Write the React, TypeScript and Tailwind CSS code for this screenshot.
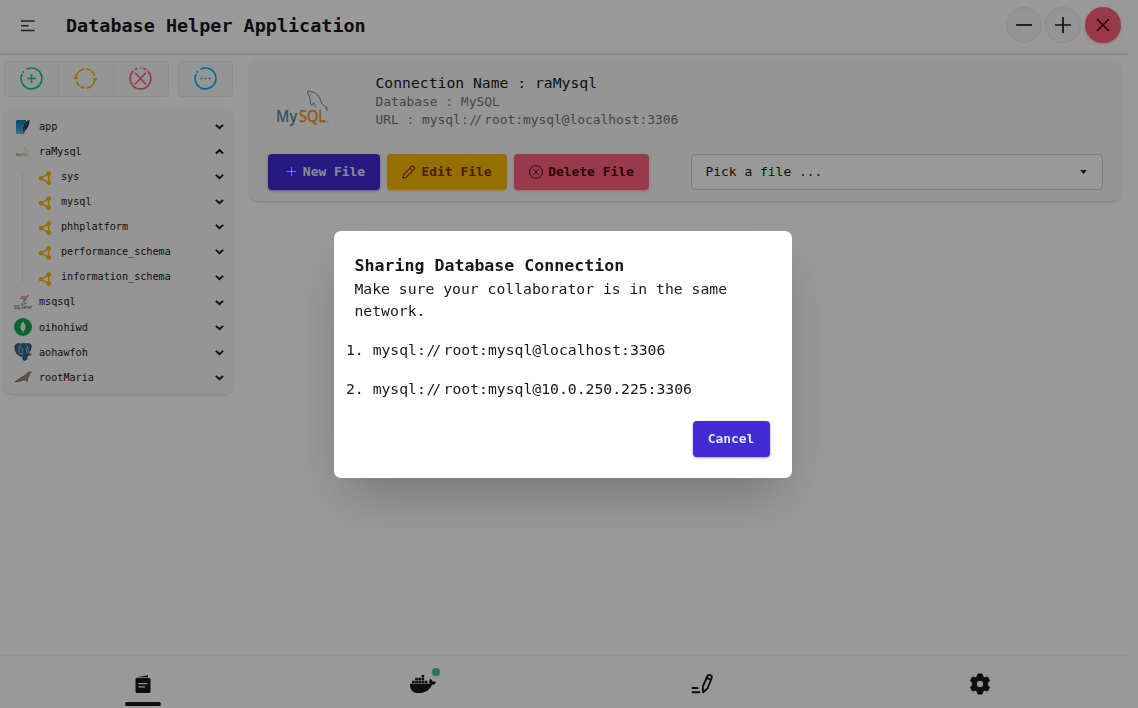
import React from "react";
import { FaDocker } from "react-icons/fa";

const Url = ({ rest }: { rest: string }) => (
  <>
    mysql:<span className="pl-[0.04em] pr-[0.36em] tracking-[-0.2em]">//</span>
    {rest}
  </>
);

function Round({ children, kind = "plus" }: { children?: React.ReactNode; kind?: string }) {
  return (
    <svg viewBox="0 0 24 24" className="size-[25px]" fill="none" stroke="currentColor" strokeWidth="1.600" strokeLinecap="round" strokeLinejoin="round">
      {kind === "plus" && <path d="M7.800 2.900A10 10 0 1 1 2.800 8.100M3.900 6l.2-.3" />}
      {kind === "close" && <path d="M19.300 5.200A10 10 0 1 1 4.700 5.200M7 3.300l1.300-.6M12 1.950v.05M15.200 2.500L17 3.300" />}
      {children}
    </svg>
  );
}

function Chevron({ up }: { up?: boolean }) {
  return (
    <svg viewBox="0 0 10 10" className="size-[9px]" fill="none" stroke="#18181b" strokeWidth="2.200">
      <path d={up ? "M1 7.200l4-3.700 4 3.700" : "M1 3.200l4 3.700 4-3.700"} />
    </svg>
  );
}

function MysqlLogo({ className }: { className: string }) {
  return (
    <svg viewBox="0 0 54 36" overflow="visible" className={className}>
      <g fill="none" stroke="#5d87a1" strokeWidth="1">
        <path d="M39 17.500c-1.500-2-2-3.500-2.200-5-1 1-1.500 2.500-2 3-2-2-1.500-5-1.600-6.500C32.500 6 30.500 4 30.500 2c0-1.500 2-1.300 3.500-.3 3 .3 5.500 1.500 7.500 4.300 2 3 2.500 7 4.500 9l4.500 3-2 .5 2.500 2.500" />
        <path d="M33.500 4.500v.7" />
      </g>
      <g transform="scale(0.88 1)" fontSize="16.500" fontFamily="Open Sans, sans-serif">
        <text x="-1" y="32.500" fontWeight="600" fill="#5d87a1">My</text>
        <text x="25" y="32.500" fill="#f29111" stroke="#f29111" strokeWidth=".4">SQL</text>
      </g>
      <path d="M50 32h1.500" stroke="#f29111" />
    </svg>
  );
}

function SqliteLogo() {
  return (
    <svg viewBox="0 0 16 16" className="size-4">
      <defs>
        <linearGradient id="lite" x1="0" y1="0" x2="0" y2="1">
          <stop offset="0" stopColor="#1278b5" />
          <stop offset="1" stopColor="#65b8e8" />
        </linearGradient>
      </defs>
      <path d="M2.500 1H11L9.500 15H2.500Q1 15 1 13.500v-11Q1 1 2.500 1Z" fill="url(#lite)" />
      <path d="M14.500 1C12 .5 9 5 8 9.500V14c2-2 6.500-6 6.500-13Z" fill="#0b3549" />
      <path d="M13.500 2Q9.500 7 8 15" stroke="#5ea9c9" strokeWidth=".6" fill="none" />
    </svg>
  );
}

function SqlServerLogo() {
  return (
    <svg viewBox="0 0 18 18" overflow="visible" className="size-[18px]">
      <path d="M7 3.500l5 .5 3-2-4 4.500-5-1.500M8.500 4.500l3 2 2-3" fill="none" stroke="#e0747a" strokeWidth="1" />
      <path d="M11 6.500l-4 5 5.500-1L10 9.500l2-3" fill="none" stroke="#8caed2" strokeWidth="1" />
      <text x="0" y="16" fontSize="5" fontFamily="Open Sans, sans-serif" fill="#333" textLength="18" lengthAdjust="spacingAndGlyphs">SQL Server</text>
    </svg>
  );
}

function MongoLogo() {
  return (
    <svg viewBox="0 0 18 18" className="size-[18px]">
      <circle cx="9" cy="9" r="9" fill="#12a84f" />
      <path d="M9 3.500c3.300 3.300 3 7.700.3 10V15h-.6v-1.500C6 11.200 5.700 6.800 9 3.500Z" fill="#fff" />
      <path d="M9 5v9" stroke="#b8d8c5" strokeWidth=".5" />
    </svg>
  );
}

function PostgresLogo() {
  return (
    <svg viewBox="0 0 18 18" className="size-[18px]">
      <path d="M1 3C2 0 5 .5 6.500 1 9 0 11 .5 12 .8c3-.8 5.500 0 5.300 3-.3 3-2 5.500-3 7l3 .2c-1 1.500-3 1.500-4 1.500-.1 2-.2 5-2.500 5-2 0-2.300-2-2.400-5-1.500 1.500-3 .8-3-.5C2.500 12.500.200 6 1 3Z" fill="#336791" stroke="#333" strokeWidth=".6" />
      <path d="M6.500 1.500C4.500 4 5 7 5 9.500c.5 1.500 2 1.500 3 .5M6 5c1.500-.8 2.500 0 2.300 2L8 12M12 1.500c2 2 2.500 5 2 8M13.800 5c-1-.6-2 0-1.600 2 .2 1.500.8 2.500 1.500 3.500" fill="none" stroke="#dfe9f1" strokeWidth=".6" />
    </svg>
  );
}

function MariaLogo() {
  return (
    <svg viewBox="0 0 18 18" className="size-[18px]">
      <path d="M17.300 4c-1.800.1-2.800-.2-4.100 1.300-1.500 2-3 2.500-5 3.500C6 10 5 11.500 3 12.500L.8 13.800l3 0 3.200-1 2-.5 2.500-.3 1.500 1.700.5-1.200c-.3-2 1.500-3.500 2-6.500Z" fill="#b58a66" stroke="#5b4a40" strokeWidth=".6" />
    </svg>
  );
}

function ShareIcon() {
  return (
    <svg viewBox="0 0 14 14" className="mt-[3px] size-[14px]" fill="#fcb700" stroke="#fcb700">
      <path d="M3 7.200l7.700-4.400 0 9Z" fill="none" strokeWidth="1.400" />
      <circle cx="2.700" cy="7.200" r="1.700" />
      <circle cx="10.700" cy="2.600" r="2" />
      <circle cx="10.700" cy="11.500" r="2" />
    </svg>
  );
}

function Row({ icon, name, up }: { icon: React.ReactNode; name: string; up?: boolean }) {
  return (
    <div className="flex h-[25.080px] items-center text-[10.150px]">
      <span className="flex w-[18px] shrink-0 justify-center">{icon}</span>
      <span className="ml-[7.500px] flex-1">{name}</span>
      <Chevron up={up} />
    </div>
  );
}

const schemas = ["sys", "mysql", "phhplatform", "performance_schema", "information_schema"];
const toolButton = "flex h-[36px] w-[55px] items-center justify-center border border-[#ebebeb] bg-[#f8f8f8]";

export default function App() {
  return (
    <div className="h-[708px] w-[1138px] overflow-hidden bg-white font-['DejaVu_Sans_Mono',monospace] text-[#18181b]">
      <div className="flex h-full w-[1128px] flex-col">
        <header className="flex h-[55px] shrink-0 items-center border-b-2 border-[#e8e8e8] pb-[3px] pl-5 pr-[7.500px]">
          <svg viewBox="0 0 16 14" className="mt-px h-[14px] w-4" stroke="#333" strokeWidth="1.500" fill="none">
            <path d="M1 2h13.500M1 6.800h7.500M1 11.600h13.500" />
          </svg>
          <h1 className="ml-[30px] mt-[2px] flex-1 text-[18.450px] font-bold leading-6">Database Helper Application</h1>
          <div className="flex gap-[3.500px]">
            <button className="flex size-[36px] items-center justify-center rounded-full border border-[#ebebeb] bg-[#f8f8f8]">
              <svg viewBox="0 0 18 18" className="size-[18px]" stroke="currentColor" strokeWidth="1.700"><path d="M1 9h16" /></svg>
            </button>
            <button className="flex size-[36px] items-center justify-center rounded-full border border-[#ebebeb] bg-[#f8f8f8]">
              <svg viewBox="0 0 18 18" className="size-[18px]" stroke="currentColor" strokeWidth="1.700"><path d="M1 9h16M9 1v16" /></svg>
            </button>
            <button className="flex size-[36px] items-center justify-center rounded-full bg-[#ff627d] text-[#4d0218] shadow-sm shadow-[#ff627d]/40">
              <svg viewBox="0 0 18 18" className="size-[18px]" stroke="currentColor" strokeWidth="1.700"><path d="M3 3l12 12M15 3L3 15" /></svg>
            </button>
          </div>
        </header>

        <main className="flex flex-1 gap-[17px] pl-[3.500px] pr-[7px] pt-[5.500px]">
          <aside className="w-[229.500px]">
            <div className="flex">
              <button className={`${toolButton} rounded-l text-[#00d390]`}><Round><path d="M8.500 12h7M12 8.500v7" /></Round></button>
              <button className={`${toolButton} border-l-0 text-[#fcb700]`}>
                <svg viewBox="0 0 24 24" className="size-[25px]" fill="none" stroke="currentColor" strokeWidth="1.700" strokeLinecap="round" strokeLinejoin="round">
                  <path d="M2.800 12a9.200 9.200 0 0 1 7.700-9.100M13.300 2.900q1.700.2 2.900 1M18.300 5.500q1.300 1.300 2 3M21.200 12a9.200 9.200 0 0 1-7.700 9.100M10.700 21.100q-1.700-.2-2.900-1M5.700 18.500q-1.300-1.300-2-3" />
                  <path d="M1 12.300h3.600l-1.800 1.500ZM19.400 11.700H23l-1.800-1.500Z" fill="currentColor" strokeWidth="1" transform="matrix(1 0 0 -1 0 24)" />
                </svg>
              </button>
              <button className={`${toolButton} rounded-r border-l-0 text-[#ff627d]`}><Round kind="close"><path d="M7.200 7l9.600 10M16.800 7L7.200 17" /></Round></button>
              <button className={`${toolButton} ml-[9px] rounded text-[#00bafe]`}><Round><path strokeWidth="2" d="M8 12h.01M12 12h.01M16 12h.01" /></Round></button>
            </div>
            <nav className="mt-[12.500px] h-[284.500px] rounded-[9px] bg-[#f8f8f8] pl-[10px] pr-[9px] pt-[5px] shadow-sm">
              <Row icon={<SqliteLogo />} name="app" />
              <Row icon={<MysqlLogo className="h-[10px] w-[14px]" />} name="raMysql" up />
              <div className="relative pl-[22px]">
                <span className="absolute left-[8px] top-[8px] h-[111px] w-px bg-[#e6e6e6]" />
                {schemas.map((s) => <Row key={s} icon={<ShareIcon />} name={s} />)}
              </div>
              <Row icon={<SqlServerLogo />} name="msqsql" />
              <Row icon={<MongoLogo />} name="oihohiwd" />
              <Row icon={<PostgresLogo />} name="aohawfoh" />
              <Row icon={<MariaLogo />} name="rootMaria" />
            </nav>
          </aside>

          <section className="h-[140px] flex-1 rounded-[8px] bg-[#f8f8f8] shadow-sm">
            <div className="flex h-[93px]">
              <div className="w-[125.500px] pl-[27px] pt-[29.500px]"><MysqlLogo className="h-[36px] w-[54px]" /></div>
              <div className="pt-[11.500px]">
                <p className="text-[14.730px] leading-[21px]">Connection Name : raMysql</p>
                <p className="text-[12.900px] leading-[18px] text-[#747476]">Database : MySQL</p>
                <p className="text-[12.900px] leading-[18px] text-[#747476]">URL : <Url rest="root:mysql@localhost:3306" /></p>
              </div>
            </div>
            <div className="flex pl-[18px] text-[12.950px] font-bold">
              <button className="flex h-[36px] w-[112px] items-center justify-center gap-[7px] rounded-[4px] bg-[#422ad5] pl-1 text-[#e0e7ff] shadow-sm shadow-[#422ad5]/40">
                <svg viewBox="0 0 10 10" className="size-[9px]" stroke="currentColor" strokeWidth="1"><path d="M0 5h10M5 0v10" /></svg>New File
              </button>
              <button className="ml-[7px] flex h-[36px] w-[120px] items-center justify-center gap-[5px] rounded-[4px] bg-[#fcb700] text-[#793205] shadow-sm shadow-[#fcb700]/40">
                <svg viewBox="0 0 14 14" className="size-[14px]" fill="none" stroke="currentColor" strokeWidth="1.100" strokeLinejoin="round"><path d="M1 13l.7-3.500L9.500 1.700c1.500-1.500 4.200 1 2.700 2.600L4.400 12.200ZM8 3.200l2.900 2.600" /></svg>Edit File
              </button>
              <button className="ml-[7px] flex h-[36px] w-[135px] items-center justify-center gap-[5px] rounded-[4px] bg-[#ff627d] text-[#4d0218] shadow-sm shadow-[#ff627d]/40">
                <svg viewBox="0 0 14 14" className="size-[14px]" fill="none" stroke="currentColor" strokeWidth="1"><circle cx="7" cy="7" r="6.400" /><path d="M4.300 4.300l5.400 5.400M9.700 4.300L4.300 9.700" /></svg>Delete File
              </button>
              <div className="ml-[42px] flex h-[36px] w-[412px] items-center justify-between rounded-[4px] border border-[#cfcfcf] bg-white pl-[13.500px] pr-[15px] pt-px font-normal">
                Pick a file ...
                <svg viewBox="0 0 8 5" className="h-[4px] w-[7px]"><path d="M0 0h8L4 5Z" fill="#18181b" /></svg>
              </div>
            </div>
          </section>
        </main>

        <footer className="grid h-[53px] w-full shrink-0 grid-cols-4 border-t border-[#f3f3f3] pl-[3.500px] pr-[8.500px]">
          <div className="flex flex-col items-center pt-[19px]">
            <svg viewBox="0 0 16 18" className="h-[18px] w-4">
              <path d="M1.500 2.200L13 .300v1.900Z" fill="#18181b" />
              <path fillRule="evenodd" d="M2.500 3h11A1.500 1.500 0 0 1 15.500 4.500v12a1.500 1.500 0 0 1-1.500 1.500h-12A1.500 1.500 0 0 1 .5 16.500v-12A1.500 1.500 0 0 1 2.500 3ZM3.500 8v1.200h9V8ZM3.500 11.200v1.200h6.500v-1.200Z" fill="#18181b" />
            </svg>
            <span className="mt-[9px] h-[3.500px] w-[36px] rounded-full bg-[#18181b]" />
          </div>
          <div className="flex justify-center pl-px pt-[15px]">
            <span className="relative h-[26px]">
              <FaDocker size={26} />
              <i className="absolute -right-[4px] -top-[3px] size-[8px] rounded-full bg-[#3fc796] shadow-sm" />
            </span>
          </div>
          <div className="flex justify-center pl-px pt-[16.500px]">
            <svg viewBox="0 0 22 22" className="size-[22px]" fill="none" stroke="#18181b" strokeWidth="1.900" strokeLinecap="round" strokeLinejoin="round">
              <path d="M1.500 15h5M1.500 19.200h7M11.800 13.500l4.700-10.500c1-2.200 5-.7 4.300 1.700L16.500 15.500l-4.500 3.700ZM15.700 4.800l4 1.700" />
            </svg>
          </div>
          <div className="flex justify-center pt-[17px]">
            <svg viewBox="0 0 22 22" className="size-[22px]">
              <path fillRule="evenodd" stroke="#18181b" strokeWidth="1" strokeLinejoin="round" d="M9 1h4l.9 2.700 1.800 1 2.800-.6 2 3.500-1.900 2.200v2.400l1.900 2.200-2 3.500-2.800-.6-1.800 1L13 21H9l-.9-2.700-1.800-1-2.800.6-2-3.500 1.900-2.200V9.800L1.500 7.600l2-3.500 2.800.6 1.800-1ZM11 7.300a3.700 3.700 0 1 0 0 7.400 3.700 3.700 0 0 0 0-7.400Z" fill="#18181b" />
            </svg>
          </div>
        </footer>
      </div>

      <div className="fixed inset-0 flex items-center justify-center bg-black/40 pr-[13px] pt-px">
        <div role="dialog" className="flex h-[247px] w-[458px] flex-col rounded-[7px] bg-white pl-[21px] pr-[22px] pt-[22.500px] shadow-2xl">
          <h2 className="text-[16.600px] font-bold leading-[24px]">Sharing Database Connection</h2>
          <p className="text-[14.740px] leading-[22px]">Make sure your collaborator is in the same network.</p>
          <ol className="-ml-[8.500px] mt-[17px] flex flex-col gap-[17.500px] text-[14.740px] leading-[22px]">
            <li>1. <Url rest="root:mysql@localhost:3306" /></li>
            <li>2. <Url rest="root:mysql@10.0.250.225:3306" /></li>
          </ol>
          <button className="mt-[21px] h-[36px] w-[77px] shrink-0 self-end rounded-[4px] bg-[#422ad5] text-[12.950px] font-bold text-[#e0e7ff] shadow-sm shadow-[#422ad5]/40">Cancel</button>
        </div>
      </div>
    </div>
  );
}
